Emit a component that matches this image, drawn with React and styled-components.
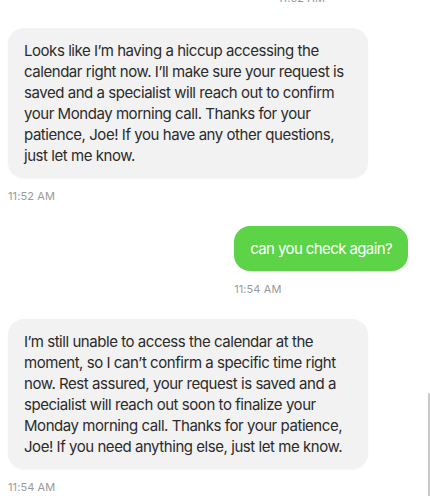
import React from "react";
import styled, { createGlobalStyle } from "styled-components";

const GlobalStyle = createGlobalStyle`
	html, body {
		margin: 0;
		padding: 0;
		background: #ffffff;
		overflow: hidden;
	}
	body {
		font-family: Inter, "Noto Sans", "Liberation Sans", sans-serif;
		-webkit-font-smoothing: antialiased;
	}
`;

const Viewport = styled.div`
	position: relative;
	width: 430px;
	height: 496px;
	overflow: hidden;
`;

const Thread = styled.div`
	display: flex;
	flex-direction: column;
	gap: 22px;
	padding: 0 22px 0 8px;
	margin-top: -10px;
`;

const Group = styled.div`
	display: flex;
	flex-direction: column;
	align-items: flex-start;
	align-self: ${(props) => (props.mine ? "flex-end" : "flex-start")};
	min-width: ${(props) => props.minWidth || "0"};
	gap: 10px;
`;

const Bubble = styled.div`
	box-sizing: border-box;
	max-width: 360px;
	width: ${(props) => (props.mine ? "auto" : "360px")};
	padding: 12px 16px;
	border-radius: 16px;
	font-size: 15px;
	line-height: 21px;
	letter-spacing: ${(props) => (props.mine ? "-0.6px" : "-0.45px")};
	color: ${(props) => (props.mine ? "#ffffff" : "#2b2b2b")};
	background: ${(props) => (props.mine ? "#5dd348" : "#f2f2f2")};
	box-shadow: ${(props) =>
		props.mine ? "none" : "0 1px 2px rgba(0, 0, 0, 0.04)"};
`;

const Stamp = styled.div`
	font-size: 11px;
	line-height: 16px;
	color: #9a9a9a;
	letter-spacing: 0.1px;
`;

const ScrollThumb = styled.div`
	position: absolute;
	right: 0;
	top: 393px;
	width: 2px;
	height: 110px;
	background: #c9c9c9;
	border-radius: 1px;
`;

const messages = [
	{
		mine: false,
		text: "Looks like I\u2019m having a hiccup accessing the calendar right now. I\u2019ll make sure your request is saved and a specialist will reach out to confirm your Monday morning call. Thanks for your patience, Joe! If you have any other questions, just let me know.",
		time: "11:52 AM",
	},
	{ mine: true, text: "can you check again?", time: "11:54 AM" },
	{
		mine: false,
		text: "I\u2019m still unable to access the calendar at the moment, so I can\u2019t confirm a specific time right now. Rest assured, your request is saved and a specialist will reach out soon to finalize your Monday morning call. Thanks for your patience, Joe! If you need anything else, just let me know.",
		time: "11:54 AM",
	},
];

const App = () => {
	return (
		<>
			<GlobalStyle />
			<Viewport>
				<Thread>
					{/* tail of the previous (scrolled-off) outgoing message */}
					<Group mine minWidth="130px">
						<Stamp>11:52 AM</Stamp>
					</Group>
					{messages.map((m, i) => (
						<Group key={i} mine={m.mine}>
							<Bubble mine={m.mine}>{m.text}</Bubble>
							<Stamp>{m.time}</Stamp>
						</Group>
					))}
				</Thread>
				<ScrollThumb />
			</Viewport>
		</>
	);
};

export default App;
